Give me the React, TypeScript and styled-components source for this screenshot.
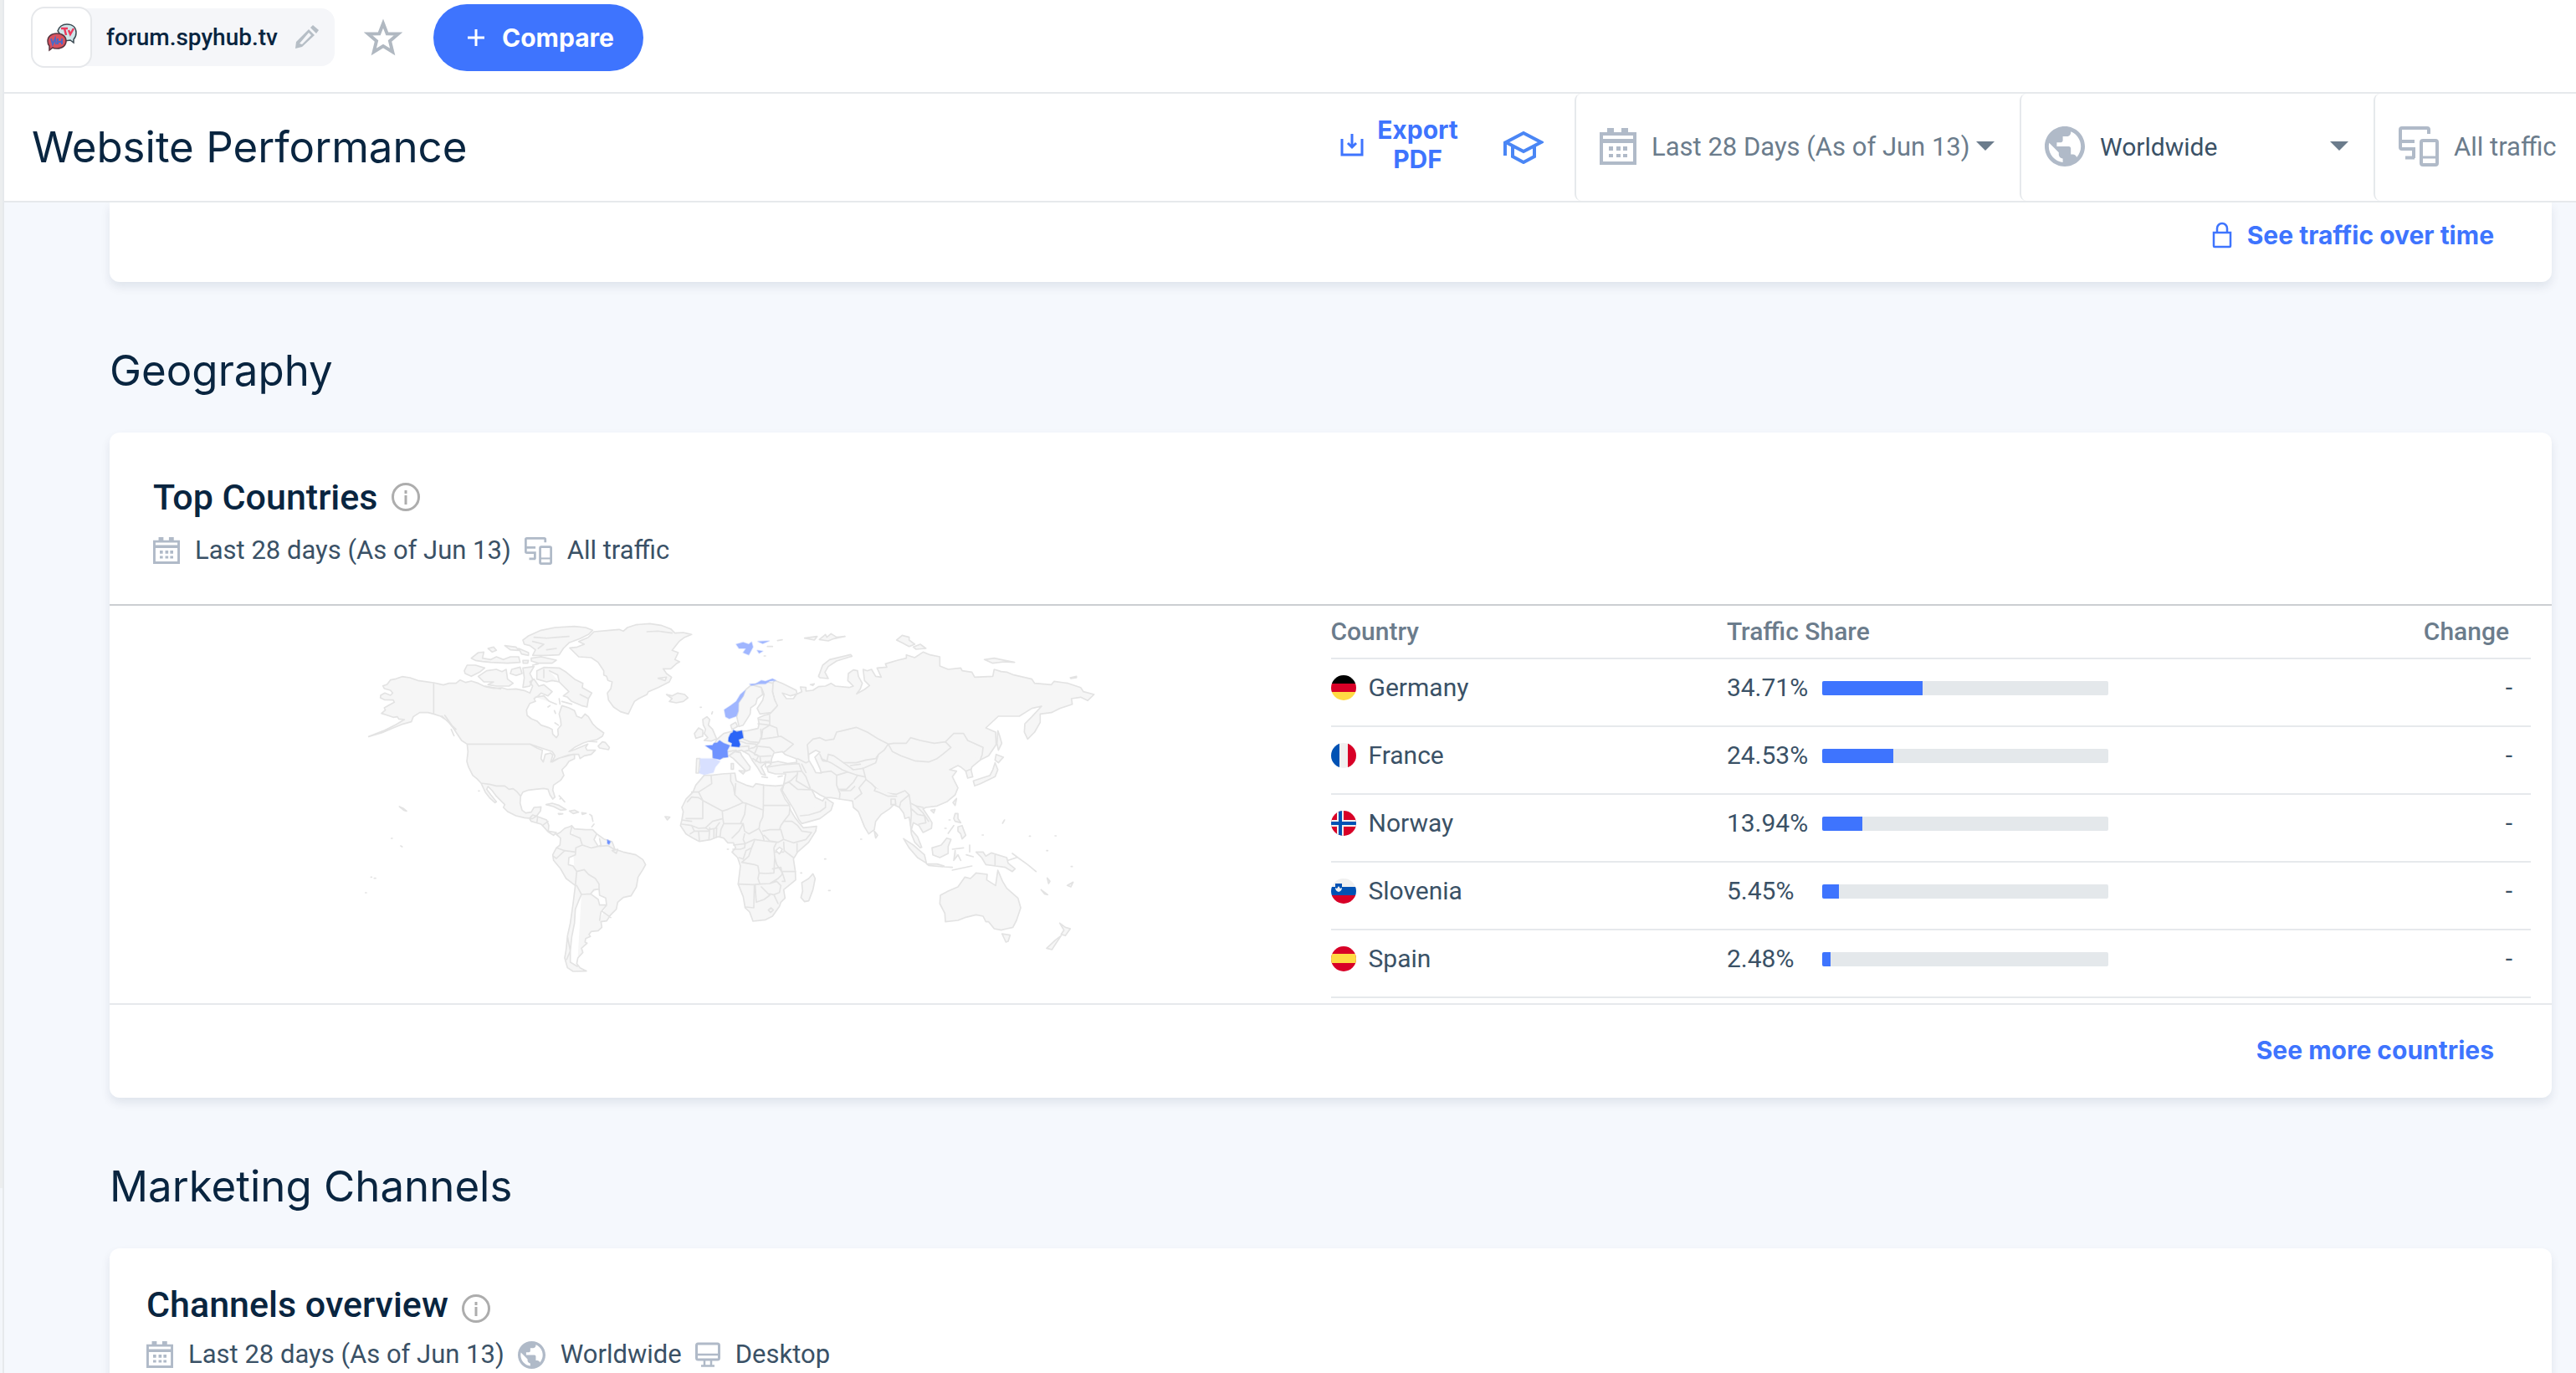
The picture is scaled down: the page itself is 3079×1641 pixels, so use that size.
import React from "react";
import styled, { createGlobalStyle } from "styled-components";

const body = `Roboto, "Liberation Sans", sans-serif`;
const display = `Inter, "Liberation Sans", sans-serif`;
const blue = "#3e74fe";
const navy = "#092540";
const slate = "#3a5166";
const muted = "#6b7c8c";
const iconGrey = "#b0bac8";
const line = "#e6e9ec";

const GlobalStyle = createGlobalStyle`
  * { box-sizing: border-box; }
  body { margin: 0; background: #f5f8fd; font-family: ${body}; color: ${slate}; font-size: 30px; }
  h1, h2, h3, p { margin: 0; }
  button, select { font: inherit; color: inherit; }
  svg { display: block; flex: none; }
`;

/* ---------- layout ---------- */

const Shell = styled.div`
  display: flex;
  height: 100vh;
  overflow: hidden;
`;

const Rail = styled.aside`
  flex: none;
  width: 5px;
  border-right: 2px solid ${line};
  background: #f3f6fa;
`;

const RailThumb = styled.div`
  height: 1420px;
  background: #eceeef;
`;

const Main = styled.div`
  flex: 1;
  min-width: 0;
`;

const TopBar = styled.header`
  display: flex;
  align-items: flex-start;
  height: 112px;
  padding: 5px 32px 0;
  background: #fff;
  border-bottom: 2px solid ${line};
`;

const SiteChip = styled.div`
  display: flex;
  align-items: center;
  height: 69px;
  margin-top: 5px;
  padding-right: 18px;
  background: #f5f6f9;
  border-radius: 16px;
`;

const SiteIcon = styled.div`
  display: grid;
  place-items: center;
  width: 73px;
  height: 73px;
  margin-right: 17px;
  background: #fff;
  border: 2px solid #e6e8eb;
  border-radius: 16px;
`;

const SiteName = styled.span`
  margin-right: 20px;
  color: ${navy};
  font-size: 28px;
  font-weight: 500;
`;

const IconButton = styled.button`
  display: grid;
  place-items: center;
  padding: 0;
  border: 0;
  background: none;
  cursor: pointer;
`;

const StarButton = styled(IconButton)`
  width: 48px;
  height: 80px;
  margin: 0 36px 0 34px;
`;

const CompareButton = styled.button`
  display: flex;
  align-items: center;
  gap: 20px;
  height: 80px;
  padding: 0 35px 0 40px;
  border: 0;
  border-radius: 40px;
  background: ${blue};
  color: #fff;
  font-family: ${display};
  font-size: 30px;
  font-weight: 700;
  cursor: pointer;
`;

const PageBar = styled.div`
  position: relative;
  z-index: 1;
  display: flex;
  align-items: stretch;
  height: 130px;
  background: #fff;
  border-bottom: 2px solid ${line};
`;

const PageTitle = styled.h1`
  flex: 1;
  align-self: center;
  padding: 0 0 2px 33px;
  color: ${navy};
  font-family: ${display};
  font-size: 51px;
  font-weight: 400;
`;

const ExportButton = styled.button`
  display: flex;
  align-items: center;
  gap: 15px;
  width: 142px;
  margin-right: 53px;
  padding: 0 0 6px;
  border: 0;
  background: none;
  color: ${blue};
  font-family: ${display};
  font-size: 30px;
  font-weight: 700;
  line-height: 35px;
  text-align: center;
  cursor: pointer;
`;

const LearnButton = styled(IconButton)`
  margin-right: 37px;
`;

const Filter = styled.label<{ $width: number; $color: string; $flush?: boolean }>`
  display: flex;
  flex: none;
  align-items: center;
  gap: 18px;
  width: ${(p) => p.$width}px;
  padding: 0 ${(p) => (p.$flush ? 0 : 28)}px 2px 28px;
  border-left: 2px solid ${line};
  border-radius: 8px 0 0 8px;
  color: ${(p) => p.$color};
`;

const FilterSelect = styled.select<{ $size: number }>`
  flex: 1;
  min-width: 0;
  padding: 0;
  border: 0;
  background: none;
  font-size: ${(p) => p.$size}px;
  appearance: none;
  outline: none;
`;

const CaretIcon = styled.svg`
  margin: 0 2px 2px -16px;
`;

const Content = styled.main`
  padding: 0 29px 0 126px;
`;

const Card = styled.section`
  background: #fff;
  border-radius: 12px;
  box-shadow: 0 6px 12px rgba(14, 30, 62, 0.09);
`;

const CutCard = styled(Card)`
  border-radius: 0 0 12px 12px;
`;

const SectionTitle = styled.h2`
  padding: 76px 0 44px;
  color: ${navy};
  font-family: ${display};
  font-size: 51px;
  font-weight: 400;
  line-height: 60px;
`;

const CardHead = styled.div`
  height: 205px;
  padding: 50px 52px 0;
`;

const CompactHead = styled.div`
  padding: 40px 44px 60px;
`;

const CardTitle = styled.h3<{ $drop?: number }>`
  display: flex;
  align-items: center;
  gap: 16px;
  color: ${navy};
  font-size: 43px;
  font-weight: 500;
  line-height: 54px;

  svg { margin-top: ${(p) => p.$drop ?? 0}px; }
`;

const CardMeta = styled.p<{ $gap: number }>`
  display: flex;
  align-items: center;
  margin-top: ${(p) => p.$gap}px;
  font-size: 31px;
  line-height: 40px;
  white-space: nowrap;
`;

const MetaItem = styled.span`
  display: flex;
  align-items: center;
  gap: 18px;
  margin-right: 16px;
`;

const CardBody = styled.div`
  display: grid;
  grid-template-columns: 1fr 1fr;
  height: 477px;
  border-top: 2px solid #cbced2;
`;

const MapPane = styled.div`
  display: flex;
  justify-content: center;
`;

const TablePane = styled.div`
  padding-right: 25px;
`;

const CardFoot = styled.div<{ $height: number; $lift: number; $line?: boolean }>`
  display: flex;
  align-items: center;
  justify-content: flex-end;
  height: ${(p) => p.$height}px;
  padding: 0 69px ${(p) => p.$lift}px 0;
  border-top: ${(p) => (p.$line ? `2px solid ${line}` : "0")};
`;

const FootLink = styled.a`
  display: flex;
  align-items: center;
  gap: 18px;
  color: ${blue};
  font-family: ${display};
  font-size: 30px;
  font-weight: 700;
  text-decoration: none;
`;

/* ---------- table ---------- */

const Table = styled.table`
  width: 100%;
  table-layout: fixed;
  border-collapse: separate;
  border-spacing: 0;
  font-size: 30px;
`;

const Th = styled.th<{ $right?: boolean }>`
  width: ${(p) => (p.$right ? "34%" : "33%")};
  height: 64px;
  padding: 0 ${(p) => (p.$right ? 26 : 0)}px 2px 0;
  border-bottom: 2px solid ${line};
  color: ${muted};
  font-size: 30px;
  font-weight: 500;
  text-align: ${(p) => (p.$right ? "right" : "left")};
`;

const Td = styled.td<{ $right?: boolean }>`
  padding: 17px ${(p) => (p.$right ? 22 : 0)}px 28px 0;
  border-bottom: 2px solid ${line};
  line-height: 34px;
  text-align: ${(p) => (p.$right ? "right" : "left")};
`;

const CellRow = styled.div`
  display: flex;
  align-items: center;
  gap: 15px;
`;

const Share = styled.span`
  width: 99px;
`;

const Track = styled.div`
  width: 342px;
  height: 17px;
  border-radius: 2px;
  background: #e4e8eb;
  overflow: hidden;
`;

const Fill = styled.div`
  height: 100%;
  background: ${blue};
`;

/* ---------- icons ---------- */

const ChatLogo = () => (
  <svg width="36" height="34" viewBox="0 0 36 34">
    <path d="M13 9C15 3 19 1 24 1c7 0 11 4 11 10 0 4-1 6-3 8v4l-4-3-7 1z" fill="#cfe6ea" stroke="#3c4a52" strokeWidth="1.5" />
    <path d="M17 6h8M21 6l2 8M26 8l2 5 4-7" stroke="#ee3a5e" strokeWidth="2.5" fill="none" />
    <path d="M12 12c7 0 11 4 11 9s-4 9-11 9c-2 0-4 0-5-1l-4 3v-5c-2-2-2-4-2-6 0-5 4-9 11-9z" fill="#d8525f" stroke="#5a3440" strokeWidth="1.5" />
    <path d="M5 18l2 7 3-7 1 7M13 18v7M13 22h5M18 18v7" stroke="#4d68c4" strokeWidth="2" fill="none" />
  </svg>
);

const Pencil = () => (
  <svg width="30" height="30" viewBox="0 0 30 30">
    <path d="M2 20 17 5l7 7L9 26l-8 2zM6 22l3 1L20 12l-3-3z" fill="#b6bec6" fillRule="evenodd" />
    <path d="M19 3 22 0l7 6-3 4z" fill="#b6bec6" />
  </svg>
);

const Star = () => (
  <svg width="46" height="46" viewBox="0 0 46 46">
    <path d="m23 6 4.700 12.300L41 18.400 31 27l3.200 13L23 33l-11.200 7L15 27 5 18.400l13.300-.1z" fill="none" stroke="#b0b8c1" strokeWidth="4" />
  </svg>
);

const Plus = () => (
  <svg width="22" height="22" viewBox="0 0 22 22">
    <path d="M11 1v20M1 11h20" stroke="#fff" strokeWidth="3" />
  </svg>
);

const Download = () => (
  <svg width="28" height="28" viewBox="0 0 28 28">
    <path d="M2 7v19h24V7M14 1v16M9 12l5 5 5-5" fill="none" stroke={blue} strokeWidth="3" />
  </svg>
);

const Cap = () => (
  <svg width="48" height="40" viewBox="0 0 48 40">
    <path d="M3 14 24 3l21 11-21 11zM2 30V14M11 19v12l13 7 13-7V19" fill="none" stroke="#4a86f5" strokeWidth="4" />
  </svg>
);

const Calendar = ({ size = 44 }: { size?: number }) => (
  <svg width={size} height={size} viewBox="0 0 44 44">
    <path d="M0 5h9V0h8v5h9V0h8v5h10v39H0zM4 9v4h36V9zM4 18v22h36V18z" fill={iconGrey} fillRule="evenodd" />
    <path d="M11 22h5v5h-5zM20 22h5v5h-5zM28 22h5v5h-5zM11 31h5v4h-5zM20 31h5v4h-5zM28 31h5v4h-5z" fill={iconGrey} />
  </svg>
);

const Globe = ({ size = 48 }: { size?: number }) => (
  <svg width={size} height={size} viewBox="2 2 20 20">
    <path
      d="M12 2C6.480 2 2 6.480 2 12s4.480 10 10 10 10-4.480 10-10S17.520 2 12 2zm-1 17.930c-3.950-.49-7-3.850-7-7.930 0-.62.080-1.210.210-1.790L9 15v1c0 1.100.9 2 2 2v1.930zm6.900-2.540c-.26-.81-1-1.390-1.900-1.390h-1v-3c0-.55-.45-1-1-1H8v-2h2c.55 0 1-.45 1-1V7h2c1.100 0 2-.9 2-2v-.41c2.930 1.190 5 4.060 5 7.410 0 2.080-.8 3.970-2.100 5.390z"
      fill={iconGrey}
    />
  </svg>
);

const Devices = ({ size = 48 }: { size?: number }) => (
  <svg width={size} height={size} viewBox="0 0 48 48">
    <path d="M36 9V4a2 2 0 0 0-2-2H4a2 2 0 0 0-2 2v21a2 2 0 0 0 2 2h14v11M2 18h17M8 37.500h11" fill="none" stroke={iconGrey} strokeWidth="4" />
    <rect x="27" y="17" width="19" height="29" rx="2" fill="none" stroke={iconGrey} strokeWidth="4" />
    <path d="M27 37h19" stroke={iconGrey} strokeWidth="3" />
  </svg>
);

const Monitor = () => (
  <svg width="30" height="30" viewBox="1 1 30 30">
    <rect x="2.500" y="3" width="27" height="19" rx="2" fill="none" stroke={iconGrey} strokeWidth="3" />
    <path d="M2 16h28M12 22v7M20 22v7M8 29.500h16" fill="none" stroke={iconGrey} strokeWidth="2.500" />
  </svg>
);

const Caret = () => (
  <CaretIcon width="22" height="11" viewBox="0 0 22 11">
    <path d="M0 0h22L11 11z" fill={muted} />
  </CaretIcon>
);

const Info = () => (
  <svg width="34" height="34" viewBox="0 0 34 34">
    <circle cx="17" cy="17" r="15.500" fill="none" stroke="#adadad" strokeWidth="3" />
    <path d="M17 9v4M17 15v11" stroke="#adadad" strokeWidth="3" />
  </svg>
);

const Lock = () => (
  <svg width="24" height="32" viewBox="0 0 24 32">
    <path d="M2 13h20v16a1 1 0 0 1-1 1H3a1 1 0 0 1-1-1zM6 13V8a6 6 0 0 1 12 0v5" fill="none" stroke={blue} strokeWidth="2.500" />
  </svg>
);

type FlagCode = "de" | "fr" | "no" | "si" | "es";

const flagArt: Record<FlagCode, React.ReactNode> = {
  de: (
    <>
      <path d="M0 0h30v10H0z" fill="#000" />
      <path d="M0 10h30v10H0z" fill="#d80027" />
      <path d="M0 20h30v10H0z" fill="#ffda44" />
    </>
  ),
  fr: (
    <>
      <path d="M0 0h30v30H0z" fill="#f0f0f0" />
      <path d="M0 0h10v30H0z" fill="#0052b4" />
      <path d="M20 0h10v30H20z" fill="#d80027" />
    </>
  ),
  no: (
    <>
      <path d="M0 0h30v30H0z" fill="#d80027" />
      <path d="M7 0h8v30H7zM0 11h30v8H0z" fill="#f0f0f0" />
      <path d="M9 0h4v30H9zM0 13h30v4H0z" fill="#0052b4" />
    </>
  ),
  si: (
    <>
      <path d="M0 0h30v10H0z" fill="#f0f0f0" />
      <path d="M0 10h30v10H0z" fill="#0052b4" />
      <path d="M0 20h30v10H0z" fill="#d80027" />
      <path d="M5 6h8v5q0 4-4 5-4-1-4-5z" fill="#0052b4" />
      <path d="M5 11l2 1 2-3 2 3 2-1q0 4-4 5-4-1-4-5z" fill="#f0f0f0" />
    </>
  ),
  es: (
    <>
      <path d="M0 0h30v30H0z" fill="#d80027" />
      <path d="M0 9h30v11H0z" fill="#ffda44" />
    </>
  ),
};

const Flag = ({ code }: { code: FlagCode }) => (
  <svg width="30" height="30" viewBox="0 0 30 30" aria-hidden="true">
    <clipPath id={`flag-${code}`}>
      <circle cx="15" cy="15" r="15" />
    </clipPath>
    <g clipPath={`url(#flag-${code})`}>{flagArt[code]}</g>
  </svg>
);

/* ---------- world map ---------- */

const americas = [
  "M295 288L238 280 210 270 182 266 160 274 140 278 128 294 113 299 118 309 140 315 148 325 140 333 120 325 105 333 104 342 118 349 150 350 154 358 135 368 118 378 122 386 108 398 130 405 150 412 165 410 170 418 190 420 160 438 120 458 62 481 110 467 150 450 185 436 215 428 222 410 245 395 275 395 295 400z",
  "M295 288L330 296 350 290 375 290 390 278 410 287 430 282 455 290 480 302 510 308 540 306 560 312 590 310 620 316 640 325 650 300 640 285 655 275 672 300 690 295 720 320 705 335 680 325 670 335 655 345 660 355 640 362 628 385 630 405 645 417 665 425 680 440 705 448 720 455 722 472 735 485 742 475 740 455 752 440 750 420 745 400 755 370 780 378 800 388 808 408 825 415 838 400 850 410 865 435 880 450 905 468 900 480 880 492 850 498 830 505 800 520 780 535 800 528 830 515 848 508 840 520 845 530 875 530 860 545 835 550 820 560 815 545 795 545 770 552 745 558 720 572 730 550 720 535 690 525 640 508 415 508 395 495 375 465 365 450 345 425 320 408 295 400z",
  "M415 508H640L665 522 685 530 680 560 688 572 695 545 715 540 722 548 715 572 740 560 775 548 800 545 800 560 780 570 770 585 755 600 762 620 750 638 725 655 722 672 730 698 722 705 712 690 705 670 690 667 660 670 635 673 615 680 607 695 595 680 580 668 565 670 550 658 520 658 495 652 465 648 450 632 435 620 420 590 414 570 418 535z",
  "M465 648L495 652 520 658 550 658 565 670 580 668 595 680 607 695 605 720 612 745 625 755 645 752 655 735 680 733 678 748 665 765 650 775 620 772 590 765 560 750 545 735 550 725 540 715 520 695 505 675 490 660 485 670 500 690 520 715 515 718 495 700 480 680z",
  "M638 775L650 762 668 768 700 780 708 800 706 820 735 825 725 835 705 822 690 805 680 795 645 785zM668 768L665 790M685 800L705 785",
  "M698 725L720 720 745 728 770 743 750 745 725 732zM782 748L800 745 815 752 795 757zM742 757L758 758 745 760zM826 754L842 756 828 760zM745 693L765 715M748 705L752 700M855 760L862 765 866 785M862 805L870 795",
  "M735 832L748 825 765 810 785 803 790 800 800 812 840 815 865 815 880 830 905 848 935 858 945 885 975 895 1020 905 1045 922 1055 940 1045 958 1028 985 1022 1020 1003 1052 975 1058 955 1075 950 1100 930 1120 915 1142 895 1145 898 1165 885 1177 860 1180 852 1190 857 1198 840 1205 838 1218 845 1222 825 1240 830 1255 812 1275 808 1295 820 1310 843 1322 795 1323 775 1310 765 1275 770 1245 775 1195 785 1150 795 1080 803 1015 770 990 750 955 725 925 722 905 735 880 748 870 750 845z",
  "M790 805L785 830 820 845 828 870 805 880 803 905 780 915 778 940 795 945 808 965 803 1015M808 965L835 958 850 975 875 990 888 1010 888 1028 870 1030 858 1045 825 1047 808 1015M858 1045L885 1065 890 1085 915 1085 912 1060 890 1050 888 1025M825 1047L815 1070 803 1100 800 1150 790 1200 785 1250 785 1290 810 1305M775 1200L785 1250 772 1280M915 1085L895 1110 890 1140M900 1108L930 1130M735 880L765 890 735 918 724 910M765 890L803 895M880 830L870 850 885 875 895 870 890 848M828 870L860 880 885 875 920 872 942 885M935 890L955 885 950 900z",
  "M783 163L800 180 815 195 860 198 885 215 905 245 905 260 915 265 920 280 935 285 930 310 918 325 922 350 940 375 965 392 993 400 1005 375 1015 355 1030 345 1060 330 1065 320 1100 305 1140 285 1148 268 1130 255 1118 238 1145 238 1165 220 1177 213 1160 205 1172 180 1150 172 1175 140 1195 125 1220 115 1190 108 1160 110 1145 95 1110 82 1070 76 1020 80 990 90 975 103 960 97 925 100 870 105 850 125 815 140 835 150 810 160z",
  "M1060 105L1100 103 1150 110M1100 272L1130 268 1125 280z",
  "M1130 330L1150 335 1170 325 1195 330 1207 342 1190 355 1165 360 1140 355 1150 345z",
  "M615 135L635 120 680 100 730 90 800 86 840 90 865 100 850 115 820 130 780 145 760 165 745 188 700 190 650 190 660 170 640 155 620 150zM655 125L700 128 780 122M650 140L690 150 670 165M700 170L735 165",
  "M645 200L680 195 735 207 720 218 670 218 645 210zM615 208L635 208 632 218 616 218zM650 225L670 220",
  "M430 200L455 180 475 178 470 200 500 205 520 195 545 205 570 195 600 195 605 215 560 218 500 215 470 212 445 208zM490 165L510 160 520 172 505 178zM550 155L590 160 600 172 570 170zM600 165L635 180 635 190 610 185z",
  "M455 265L485 245 520 240 540 248 555 240 560 275 580 290 565 300 520 300 490 295 510 285 475 285zM415 225L445 225 478 235 460 250 430 265 408 255 405 245zM575 240L605 232 612 255 590 262 570 255zM615 235L655 230 640 255 650 275 640 300 615 305 620 270z",
  "M665 245L690 233 745 235 770 250 800 275 830 290 828 305 862 325 850 345 845 375 825 370 790 355 775 340 760 335 780 320 760 300 745 285 720 280 700 285 665 275zM690 240L690 270M745 285L740 260 710 245M820 330L850 345M755 355L790 365M660 340L690 335 710 355 735 365",
  "M745 345L748 365M712 370L705 375M728 388L732 398M730 432L742 440",
  "M885 515L900 500 910 502 925 520 922 528 890 522zM358 455L368 478M325 408L375 455M335 405L360 440M480 300L535 310M850 498L880 500",
  "M172 732L185 738 198 748 188 745zM143 846h4M177 873l5 3M70 985h3M82 989h5M50 1041h4M456 676h3M1125 768L1142 770 1133 780z",
];

const oldWorld = [
  "M110 492L135 470 165 462 220 460 258 452 262 435 258 415 280 405 300 400 325 372 316 345 310 320 310 290 318 280 345 290 395 315 398 328 375 335 345 325 360 345 385 345 395 330 415 320 410 303 430 305 430 318 455 315 475 302 500 300 520 290 535 300 585 305 600 300 580 280 582 255 600 242 615 245 618 265 632 290 625 310 612 328 640 312 658 298 640 280 635 240 650 245 665 240 680 265 700 268 685 235 720 232 715 220 760 207 790 200 790 188 820 198 850 178 875 188 910 195 910 228 940 240 985 235 990 245 1025 250 1035 268 1100 265 1105 240 1130 248 1150 250 1175 260 1240 275 1250 290 1310 295 1320 283 1370 290 1415 305 1425 320 1463 330 1440 352 1415 340 1382 345 1385 365 1340 380 1310 395 1270 400 1270 430 1250 465 1225 490 1213 465 1215 435 1240 410 1275 372 1240 380 1195 408 1120 408 1075 450 1110 465 1112 510 1085 550 1055 565 1025 590 1022 600 1028 625 1010 630 1003 605 985 590 975 585 945 600 970 605 955 625 975 665 965 690 935 715 900 730 860 735 850 740 870 770 882 790 880 810 850 825 835 800 815 790 808 815 830 840 845 878 840 880 820 860 808 830 805 800 800 770 785 775 780 755 765 735 745 725 730 740 700 760 680 785 675 815 655 830 640 805 618 750 600 735 597 712 550 705 520 700 500 700 480 690 450 670 465 700 490 712 498 700 528 720 520 745 480 775 415 793 405 780 385 740 345 675 350 655 357 615 320 615 295 608 290 590 305 580 300 575 285 575 270 590 285 620 270 615 255 590 240 570 225 545 200 530 175 535 150 552 120 560 95 555 100 510z",
  "M65 620L35 655 25 680 0 705 -15 735 -10 750 -15 780 -20 800 0 830 25 845 48 857 90 850 115 840 135 845 150 862 170 862 178 880 165 895 185 915 195 945 190 985 187 1010 205 1055 212 1095 228 1110 240 1143 285 1138 310 1125 335 1090 340 1075 355 1060 350 1030 375 1010 393 995 392 965 385 920 400 895 440 860 465 820 468 803 420 808 405 790 390 770 375 745 370 725 355 705 340 672 350 655 320 658 280 655 250 650 240 662 215 655 180 640 175 612 130 615 90 620z",
  "M90 620L92 650 45 680 20 680M45 680L60 710 130 748 150 742 205 718 175 690 170 660 160 640 160 615M178 650L175 690M205 718L215 720 277 745 278 655M278 728H370M5 715L20 698 45 700 60 710 60 775 0 775M130 748L132 775 95 785 70 808 45 810 20 800M132 775L135 793 195 793 210 760 215 720M277 745L275 770 265 790 262 810 225 830 210 820 205 793 195 793M135 793L125 815 122 840M205 793L190 820 165 845M110 808L108 842M100 812V845M85 808L82 850M70 808L80 815 105 810 120 790M45 820L48 855M-15 795L20 800 30 820 15 830M30 820L48 820 80 820M-15 780L20 785",
  "M210 830L205 850 212 865 170 870M212 865L245 850 280 855 275 835 262 812M275 820L300 815 335 815 340 800 350 785 370 760 372 740M280 835L300 855 330 860 350 850 340 815M350 785L380 785 400 800 415 820 450 825 430 850 385 862 350 850M350 860L352 890 385 915M398 865L398 895M245 855L235 880 225 910 200 932 245 940 258 945 262 970 285 972 315 970 318 915 315 880 325 860 280 855M212 865L210 880 195 885 168 885M235 880L215 890 205 920 190 915M187 1010L240 1012 265 1010 258 990 262 970M265 1010L300 1008 330 990 345 975 340 950 310 955M345 965L392 965M320 895L350 895M318 915L325 940 345 968M345 968L355 1000 345 1000M248 1015L250 1050 252 1075 280 1065 300 1050 270 1020M245 1015L243 1095 212 1092M300 1008L325 1000 340 1015 335 1040 315 1048 300 1045M315 1048L330 1080M295 1103L305 1095 313 1103 303 1112z",
  "M415 1005L440 990 455 973 463 990 455 1030 440 1070 425 1073 412 1058 418 1035z",
  "M440 560L435 510 455 490 480 485 500 495 530 490 540 465 570 458 610 448 650 465 690 490 725 508 710 530 690 545 680 560 645 565 610 575 565 575 530 550 510 545 505 570 490 568 480 545M725 508L745 505 790 505 805 485 840 495 890 505 930 500 950 520 920 545 900 560 870 572 820 568 770 550 740 535zM930 500L960 470 995 470 1010 495 1065 520 1062 545 1055 565M690 545L680 575 635 595 645 635 665 650 680 665 705 682 755 688 785 675 800 690 805 720 825 730 850 735",
  "M645 635L620 665 630 685 605 705M680 665L675 675 690 680 725 695 755 695M735 705L750 705 752 725 735 725zM800 690L770 715 765 735M805 720L808 760 805 800M808 740L830 760 855 765 860 790 835 795M825 730L850 755 870 785M415 605L430 625 445 665M480 610L520 605 540 620 540 655 552 685 550 705M540 620L580 608 615 620 600 645 575 670 545 670M615 620L640 625M555 675L590 675 605 660M295 590L345 582 405 578 415 605 350 610M400 610L395 640 445 670M355 650L375 640 400 615M350 650L370 645 400 670 450 672M410 765L440 762 480 750 500 735 500 715M485 560L520 575 560 600 580 608M565 575L600 600 635 595M590 585L625 580M400 560L430 575 440 570M415 580L430 610M1003 605L1022 598",
  "M270 490L310 485 340 480 385 508 360 530 340 545M270 490L275 455 300 440 325 450 330 478M205 462V490L230 500 262 502 270 480 268 455M188 495L215 505 250 508M190 518L225 515 225 530 205 535M250 515L300 520 315 535M255 520L245 545 265 552 305 550M225 530L260 550 250 570M262 502L245 520 225 525M258 435L300 440M262 420L298 425M300 405V440M265 552L268 575 300 570M240 560L265 575M285 570V590M150 535L180 530",
  "M187 390L188 360 205 335 215 312 235 295 270 305 275 330 255 345 250 365 232 378 230 400 205 440 190 445 182 410zM235 295L290 285 312 290 310 320 318 350 328 370 305 395 265 400 255 380 275 350 280 330 270 305zM160 440L178 430 185 445 165 455z",
  "M60 420L75 410 85 420 80 440 95 455 105 478 110 490 90 497 65 495 78 485 65 470 70 455 62 440zM30 470L45 450 60 458 60 480 35 487zM95 392L92 400M51 376h4",
  "M155 550L175 535 195 538 200 550 215 570 230 590 228 600 215 605 190 580 170 560zM190 603L212 605 205 615zM162 578h8v20h-8zM38 560L50 560 48 585 45 612 36 612zM272 625L292 628M330 625L345 622",
  "M475 265L490 225 515 205 590 187 595 193 540 210 510 230 498 250 510 273 480 270zM425 128L470 122 460 135zM478 133L500 115 505 125 520 112 540 125 570 122 530 130 510 138zM755 135L775 118 800 125 800 135 820 150 800 158 775 145zM815 160L840 150 860 165 825 168zM1070 205L1105 200 1130 205 1178 215 1140 213 1100 218zM1378 270L1400 265 1400 270 1380 273zM328 137L345 134M280 192h5M292 158h18M446 295L460 292 455 298z",
  "M1118 460L1125 480 1132 505 1120 530 1115 505zM1108 575L1118 600 1108 625 1080 638 1055 650 1035 658 1030 640 1060 630 1090 620 1100 600zM1112 545L1138 555 1120 575 1108 565zM970 703L965 728 957 718zM878 745L893 742 888 755zM675 820L687 835 680 845z",
  "M960 775L965 757 975 757 975 775 985 790 965 785zM975 805L990 800 995 815 1003 835 990 848 985 830 975 820zM940 828L960 800M780 847L815 870 855 905 862 935 830 915 800 880zM862 937L900 938 925 945 920 948 870 943zM882 880L915 870 935 845 950 850 940 875 940 900 910 915 885 905zM955 885L995 880M965 890L960 925 975 905 985 925M925 948L955 950M955 960L1025 945M1017 870V895M1005 905L1030 912",
  "M1040 895L1065 895 1075 910 1095 898 1150 915 1155 935 1180 955 1170 965 1145 950 1110 945 1075 940 1060 915zM1108 905V945M1170 900L1190 915 1225 940 1255 965M1155 925L1185 915",
  "M912 1050L940 1035 975 1020 1000 985 1020 990 1040 970 1080 975 1078 995 1110 1015 1118 960 1135 1000 1150 1025 1190 1060 1200 1095 1185 1140 1172 1165 1150 1170 1130 1175 1105 1170 1085 1145 1075 1145 1065 1125 1040 1120 1000 1130 975 1140 930 1145 928 1115 910 1080zM1133 1188L1162 1193 1155 1215 1147 1218z",
  "M1340 1150L1360 1165 1378 1170 1360 1195 1345 1190 1355 1175zM1345 1195L1325 1225 1312 1245 1293 1240 1325 1210zM1273 1030L1297 1048 1285 1045zM1367 1015L1388 1003 1380 1020zM1295 988L1305 1000 1300 1008zM1142 780L1135 792M1062 834h4M1231 838h4M1323 837h4M1293 890h4M1381 947h4M626 849h4M497 920h4M411 970h4M511 1033h6M148 885h4M943 780h4M928 810h5",
];

const seas = [
  "M307 560L315 540 345 535 355 545 395 560 397 573 365 578 330 570 305 575z",
  "M440 545L465 530 480 537 462 555 480 595 485 612 465 610 455 590 440 565z",
  "M322 890L335 878 345 885 335 902z",
];

const highlights: { id: string; fill: string; d: string[] }[] = [
  {
    id: "norway",
    fill: "#a0b6ff",
    d: [
      "M137 385L160 370 180 355 195 330 212 315 205 335 188 360 187 390 180 408 155 417 142 410z",
      "M228 293L250 292 270 280 285 283 310 274 322 280 300 282 285 292 260 292 235 298z",
      "M180 150L205 143 225 150 235 142 240 160 225 188 205 180 215 165 190 165zM258 140L298 138 275 148zM255 172L275 175 262 182z",
    ],
  },
  { id: "spain", fill: "#d8e0ff", d: ["M50 560L100 560 122 570 105 590 98 610 65 618 47 612 52 590z"] },
  {
    id: "france",
    fill: "#6f93ff",
    d: [
      "M120 495L135 505 157 513 148 530 150 555 133 556 122 563 97 558 95 530 82 522 70 514 95 512 100 505 112 503z",
      "M-282 851L-271 858 -276 868 -282 864z",
    ],
  },
  { id: "germany", fill: "#2c65f7", d: ["M170 458L182 464 200 460 205 485 188 492 194 510 190 518 163 516 165 505 152 498 153 485 160 470 168 466z"] },
];

const WorldMap = () => (
  <svg width="900" height="475" viewBox="-27 12 2700 1425" role="img" aria-label="Traffic share by country">
    <g fill="#f6f6f6" stroke="#e3e3e3" strokeWidth="5" strokeLinejoin="round" strokeLinecap="round">
      <path d={americas.join("")} />
      <g transform="translate(1200 0)">
        <path d={oldWorld[0]} />
        <path d={oldWorld[1]} />
        {oldWorld.slice(2).map((d) => (
          <path key={d} d={d} fill={d.includes("z") && !d.startsWith("M210") ? "#f6f6f6" : "none"} />
        ))}
        <path d={seas.join("")} fill="#fff" />
        {highlights.map((c) => (
          <path key={c.id} d={c.d.join("")} fill={c.fill} stroke={c.fill} strokeOpacity="0.350" />
        ))}
      </g>
    </g>
  </svg>
);

/* ---------- page ---------- */

const countries: { code: FlagCode; name: string; share: number }[] = [
  { code: "de", name: "Germany", share: 34.71 },
  { code: "fr", name: "France", share: 24.53 },
  { code: "no", name: "Norway", share: 13.94 },
  { code: "si", name: "Slovenia", share: 5.45 },
  { code: "es", name: "Spain", share: 2.48 },
];

export default function App() {
  return (
    <Shell>
      <GlobalStyle />
      <Rail>
        <RailThumb />
      </Rail>
      <Main>
        <TopBar>
          <SiteChip>
            <SiteIcon>
              <ChatLogo />
            </SiteIcon>
            <SiteName>forum.spyhub.tv</SiteName>
            <IconButton aria-label="Edit website">
              <Pencil />
            </IconButton>
          </SiteChip>
          <StarButton aria-label="Add to favorites">
            <Star />
          </StarButton>
          <CompareButton>
            <Plus />
            Compare
          </CompareButton>
        </TopBar>

        <PageBar>
          <PageTitle>Website Performance</PageTitle>
          <ExportButton>
            <Download />
            <span>Export PDF</span>
          </ExportButton>
          <LearnButton aria-label="Learn more">
            <Cap />
          </LearnButton>
          <Filter $width={532} $color={muted}>
            <Calendar />
            <FilterSelect $size={31} aria-label="Date range">
              <option>Last 28 Days (As of Jun 13)</option>
            </FilterSelect>
            <Caret />
          </Filter>
          <Filter $width={423} $color={slate}>
            <Globe />
            <FilterSelect $size={30} aria-label="Country">
              <option>Worldwide</option>
            </FilterSelect>
            <Caret />
          </Filter>
          <Filter $width={242} $color={muted} $flush>
            <Devices />
            <FilterSelect $size={31} aria-label="Traffic source">
              <option>All traffic</option>
            </FilterSelect>
          </Filter>
        </PageBar>

        <Content>
          <CutCard>
            <CardFoot $height={95} $lift={18}>
              <FootLink href="#traffic">
                <Lock />
                See traffic over time
              </FootLink>
            </CardFoot>
          </CutCard>

          <SectionTitle>Geography</SectionTitle>
          <Card>
            <CardHead>
              <CardTitle>
                Top Countries
                <Info />
              </CardTitle>
              <CardMeta $gap={17}>
                <MetaItem>
                  <Calendar size={32} />
                  Last 28 days (As of Jun 13)
                </MetaItem>
                <MetaItem>
                  <Devices size={33} />
                  All traffic
                </MetaItem>
              </CardMeta>
            </CardHead>
            <CardBody>
              <MapPane>
                <WorldMap />
              </MapPane>
              <TablePane>
                <Table>
                  <thead>
                    <tr>
                      <Th>Country</Th>
                      <Th>Traffic Share</Th>
                      <Th $right>Change</Th>
                    </tr>
                  </thead>
                  <tbody>
                    {countries.map((c) => (
                      <tr key={c.code}>
                        <Td>
                          <CellRow>
                            <Flag code={c.code} />
                            {c.name}
                          </CellRow>
                        </Td>
                        <Td>
                          <CellRow>
                            <Share>{c.share}%</Share>
                            <Track>
                              <Fill style={{ width: `${Math.ceil(c.share)}%` }} />
                            </Track>
                          </CellRow>
                        </Td>
                        <Td $right>-</Td>
                      </tr>
                    ))}
                  </tbody>
                </Table>
              </TablePane>
            </CardBody>
            <CardFoot $height={113} $lift={4} $line>
              <FootLink href="#countries">See more countries</FootLink>
            </CardFoot>
          </Card>

          <SectionTitle>Marketing Channels</SectionTitle>
          <Card>
            <CompactHead>
              <CardTitle $drop={10}>
                Channels overview
                <Info />
              </CardTitle>
              <CardMeta $gap={13}>
                <MetaItem>
                  <Calendar size={32} />
                  Last 28 days (As of Jun 13)
                </MetaItem>
                <MetaItem>
                  <Globe size={33} />
                  Worldwide
                </MetaItem>
                <MetaItem>
                  <Monitor />
                  Desktop
                </MetaItem>
              </CardMeta>
            </CompactHead>
          </Card>
        </Content>
      </Main>
    </Shell>
  );
}
